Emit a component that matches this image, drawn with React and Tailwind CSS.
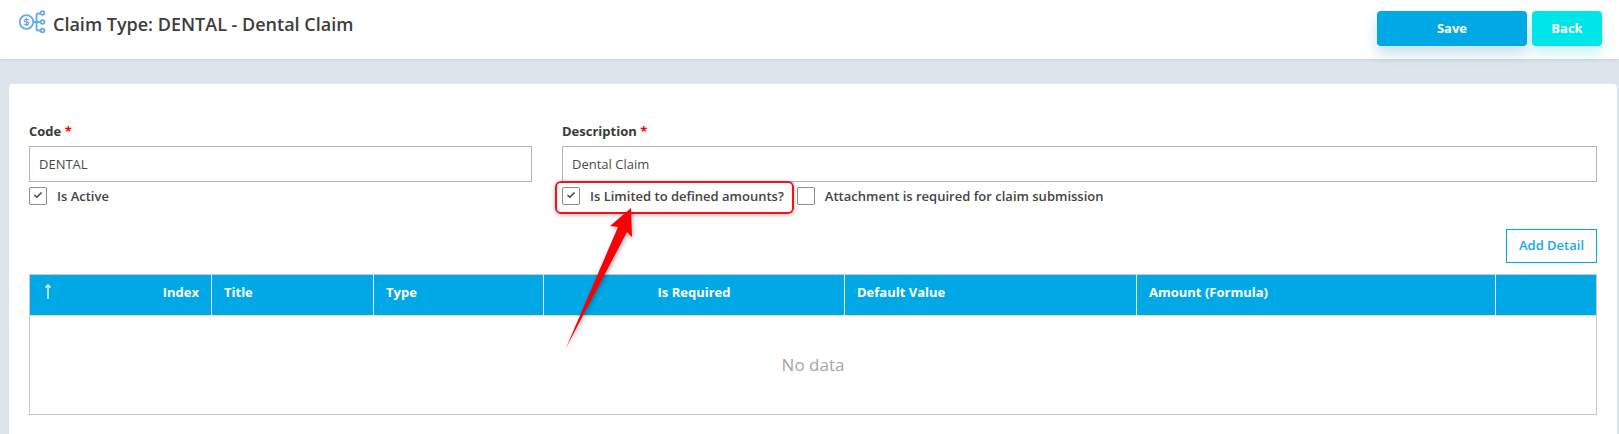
import React from "react";

const columns = [
  { label: "Index", width: "w-[182px]", align: "justify-end" },
  { label: "Title", width: "w-[162px]", align: "justify-start" },
  { label: "Type", width: "w-[170px]", align: "justify-start" },
  { label: "Is Required", width: "w-[301px]", align: "justify-center" },
  { label: "Default Value", width: "w-[292px]", align: "justify-start" },
  { label: "Amount (Formula)", width: "w-[359px]", align: "justify-start" },
  { label: "", width: "flex-1", align: "justify-start" },
];

function ClaimIcon() {
  return (
    <svg width="28" height="24" viewBox="0 0 28 24" fill="none" stroke="#64a9ee" strokeWidth="1.800" className="-mt-[4px] shrink-0">
      <circle cx="7.500" cy="12" r="6.800" />
      <path d="M10 10.200C9.500 9 5.300 8.700 5.200 10.500 5.100 12.400 9.900 11.500 9.800 13.500 9.700 15.300 5.600 15.200 5 13.800M7.500 7.800v8.400" strokeWidth="1.200" />
      <path d="M14 12h7M17.500 12V5.500Q17.500 3.500 19.500 3.500H21M17.500 12V18.500Q17.500 20.500 19.500 20.500H21" />
      <circle cx="23.500" cy="3" r="1.900" />
      <circle cx="23.500" cy="12" r="1.900" />
      <circle cx="23.500" cy="20.500" r="1.900" />
    </svg>
  );
}

function CheckBox({ checked }) {
  return (
    <span className="flex h-[18px] w-[18px] shrink-0 items-center justify-center rounded-[2px] border border-[#8c8c8c] bg-white">
      {checked && (
        <svg width="10" height="8" viewBox="0 0 10 8" fill="none" stroke="#444" strokeWidth="1.500" className="-mt-[3px]">
          <path d="M1.500 4l2.400 2.300L8.500 1.500" />
        </svg>
      )}
    </span>
  );
}

function Field({ label, value, className }) {
  return (
    <div className={className}>
      <label className="block h-[27px] text-[13px] leading-[24px] font-bold text-[#3a3a3a]">
        {label} <span className="text-[#f00]">*</span>
      </label>
      <div className="flex h-[36px] items-center border border-[#b5b5b5] px-[9px] pt-[2px] text-[13px] text-[#4a4a4a]">{value}</div>
    </div>
  );
}

export default function App() {
  return (
    <div className="relative h-[434px] w-[1619px] overflow-hidden bg-[#dde5ec] font-['Open_Sans',sans-serif]">
      {/* Page header */}
      <header className="flex h-[59px] justify-between bg-white pr-[17px] pl-[19px] shadow-[0_1px_3px_rgba(0,0,0,0.08)]">
        <div className="flex h-[48px] items-center gap-[6px]">
          <ClaimIcon />
          <h1 className="text-[18px] font-semibold text-[#3d3d3d]">Claim Type: DENTAL - Dental Claim</h1>
        </div>
        <div className="flex gap-[5px] pt-[11px]">
          <button className="h-[35px] w-[150px] rounded-[4px] bg-[#00a9e6] text-[13px] font-bold text-white shadow-[0_8px_14px_rgba(0,120,170,0.22)]">Save</button>
          <button className="h-[35px] w-[70px] rounded-[4px] bg-[#00e5e8] text-[13px] font-bold text-white shadow-[0_8px_14px_rgba(0,200,200,0.2)]">Back</button>
        </div>
      </header>

      {/* Form card */}
      <main className="mt-[25px] ml-[9px] h-[360px] w-[1608px] rounded-[4px] bg-white px-[20px] pt-[35px]">
        <div className="flex gap-[30px]">
          <Field label="Code" value="DENTAL" className="w-[503px]" />
          <Field label="Description" value="Dental Claim" className="w-[1035px]" />
        </div>

        <div className="mt-[5px] flex h-[18px] gap-[30px]">
          <div className="flex w-[503px] items-center gap-[10px] text-[13px] font-semibold text-[#444]">
            <CheckBox checked />
            <span className="pt-[2px]">Is Active</span>
          </div>
          <div className="flex items-center text-[13px] font-semibold text-[#444]">
            <CheckBox checked />
            <span className="ml-[10px] pt-[2px]">Is Limited to defined amounts?</span>
            <span className="ml-[13px]"><CheckBox /></span>
            <span className="ml-[10px] pt-[2px]">Attachment is required for claim submission</span>
          </div>
        </div>

        <div className="mt-[24px] flex justify-end">
          <button className="h-[34px] w-[91px] border border-[#00a9e6] text-[13px] font-semibold text-[#1aa7e8]">Add Detail</button>
        </div>

        {/* Details table */}
        <div className="mt-[11px] h-[141px] w-[1568px] border border-[#c8c8c8]">
          <div className="flex h-[41px] border-b border-[#dcdcdc] bg-[#00a9e6] text-[13px] font-bold text-white">
            {columns.map((col, i) => (
              <div
                key={i}
                className={`relative flex items-center border-r border-[#e4f4fb] px-[12px] last:border-r-0 ${col.width} ${col.align}`}
              >
                {i === 0 && (
                  <svg className="absolute top-[9px] left-[14px]" width="8" height="15" viewBox="0 0 8 15" fill="none" stroke="#fff" strokeWidth="1.300">
                    <path d="M4 1v14M1.500 3.500L4 1l2.500 2.500" />
                  </svg>
                )}
                <span className="pb-[4px]">{col.label}</span>
              </div>
            ))}
          </div>
          <div className="flex h-[98px] items-center justify-center text-[17px] text-[#a6a6a6]">No data</div>
        </div>
      </main>

      {/* Screenshot annotation */}
      <div className="absolute top-[181px] left-[555px] h-[33px] w-[239px] rounded-[6px] border-2 border-[#f0141e] shadow-[0_1px_4px_rgba(0,0,0,0.3)]" />
      <svg className="absolute top-0 left-0 drop-shadow-[1px_2px_2px_rgba(0,0,0,0.3)]" width="1619" height="434" viewBox="0 0 1619 434">
        <path d="M631 208L610 226L618 227L566 348L627 232L632 237Z" fill="#fb0007" />
      </svg>
    </div>
  );
}
